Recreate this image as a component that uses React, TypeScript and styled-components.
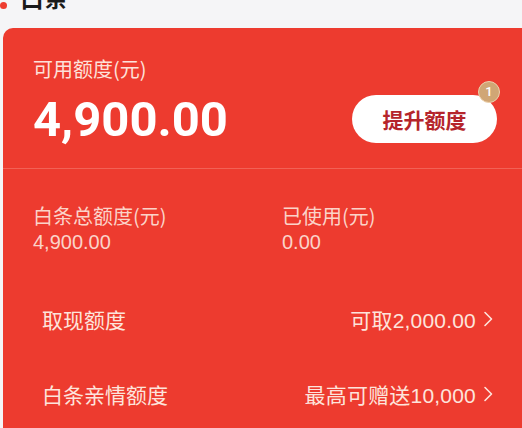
import React from 'react';
import styled, { createGlobalStyle } from 'styled-components';

const GlobalStyle = createGlobalStyle`
  html, body {
    margin: 0;
    padding: 0;
    background: #f5f5f7;
    overflow: hidden;
  }
  body {
    font-family: 'Noto Sans CJK SC', 'Noto Sans', sans-serif;
  }
`;

const Page = styled.div`
  width: 522px;
  height: 428px;
  overflow: hidden;
`;

const Header = styled.div`
  display: flex;
  align-items: center;
  gap: 13px;
  height: 30px;
  margin-top: -18px;
  margin-bottom: 16px;
`;

const Dot = styled.span`
  width: 7px;
  height: 7px;
  border-radius: 50%;
  background: #ee3d30;
  margin-top: 16px;
`;

const Title = styled.h2`
  margin: 0;
  font-size: 24px;
  line-height: 30px;
  font-weight: 700;
  color: #1a1a1a;
`;

const Card = styled.div`
  margin-left: 3px;
  margin-right: -3px;
  height: 420px;
  border-radius: 10px 0 0 0;
  background: #ed3b2f;
`;

const Top = styled.div`
  padding: 27px 28px 20px 30px;
  border-bottom: 1px solid #f26156;
`;

const Label = styled.div<{ $tone?: string }>`
  font-size: 20px;
  line-height: 28px;
  color: ${(p) => p.$tone || '#fde1da'};
`;

const AmountRow = styled.div`
  display: flex;
  align-items: center;
  justify-content: space-between;
  margin-top: 9px;
`;

const Amount = styled.div`
  font-family: Roboto, 'Liberation Sans', sans-serif;
  font-size: 49px;
  line-height: 56px;
  font-weight: 700;
  color: #fff;
  letter-spacing: 0;
`;

const RaiseButton = styled.button`
  position: relative;
  width: 145px;
  height: 48px;
  border: none;
  border-radius: 24px;
  background: #fff;
  color: #b5252b;
  font-family: 'Noto Sans CJK SC', sans-serif;
  font-size: 21px;
  font-weight: 600;
  padding: 0;
  margin-top: -2px;
`;

const Badge = styled.span`
  position: absolute;
  top: -14px;
  right: -3px;
  width: 20px;
  height: 20px;
  border-radius: 50%;
  border: 1px solid #ecd2ae;
  background: #d0a675;
  color: #fff;
  font-family: Roboto, sans-serif;
  font-size: 13px;
  line-height: 20px;
  font-weight: 500;
  text-align: center;
`;

const Stats = styled.div`
  display: grid;
  grid-template-columns: 249px 1fr;
  padding: 33px 30px 0;
`;

const Stat = styled.div`
  display: flex;
  flex-direction: column;
`;

const StatValue = styled.div`
  font-family: 'Liberation Sans', Arial, sans-serif;
  font-size: 20px;
  line-height: 24px;
  color: #fbd3c9;
`;

const Rows = styled.div`
  margin-top: 27px;
`;

const Row = styled.div`
  display: flex;
  align-items: center;
  justify-content: space-between;
  height: 75px;
  padding: 0 31px 0 39px;
  font-size: 21px;
  color: #fde4dc;
`;

const RowValue = styled.span`
  display: flex;
  align-items: center;
  gap: 6px;
  font-family: 'Liberation Sans', 'Noto Sans CJK SC', sans-serif;
  letter-spacing: 0.2px;
`;

const Chevron = () => (
  <svg width="12" height="18" viewBox="0 0 12 18" fill="none">
    <path d="M3 2.5l6.5 6.5L3 15.5" stroke="#fde4dc" strokeWidth="1.6" strokeLinecap="round" strokeLinejoin="round" />
  </svg>
);

export default function App() {
  return (
    <Page>
      <GlobalStyle />
      <Header>
        <Dot />
        <Title>白条</Title>
      </Header>
      <Card>
        <Top>
          <Label>可用额度(元)</Label>
          <AmountRow>
            <Amount>4,900.00</Amount>
            <RaiseButton>
              提升额度
              <Badge>1</Badge>
            </RaiseButton>
          </AmountRow>
        </Top>
        <Stats>
          <Stat>
            <Label $tone="#fbd3c9">白条总额度(元)</Label>
            <StatValue>4,900.00</StatValue>
          </Stat>
          <Stat>
            <Label $tone="#fbd3c9">已使用(元)</Label>
            <StatValue>0.00</StatValue>
          </Stat>
        </Stats>
        <Rows>
          <Row>
            <span>取现额度</span>
            <RowValue>
              可取2,000.00 <Chevron />
            </RowValue>
          </Row>
          <Row>
            <span>白条亲情额度</span>
            <RowValue>
              最高可赠送10,000 <Chevron />
            </RowValue>
          </Row>
        </Rows>
      </Card>
    </Page>
  );
}
